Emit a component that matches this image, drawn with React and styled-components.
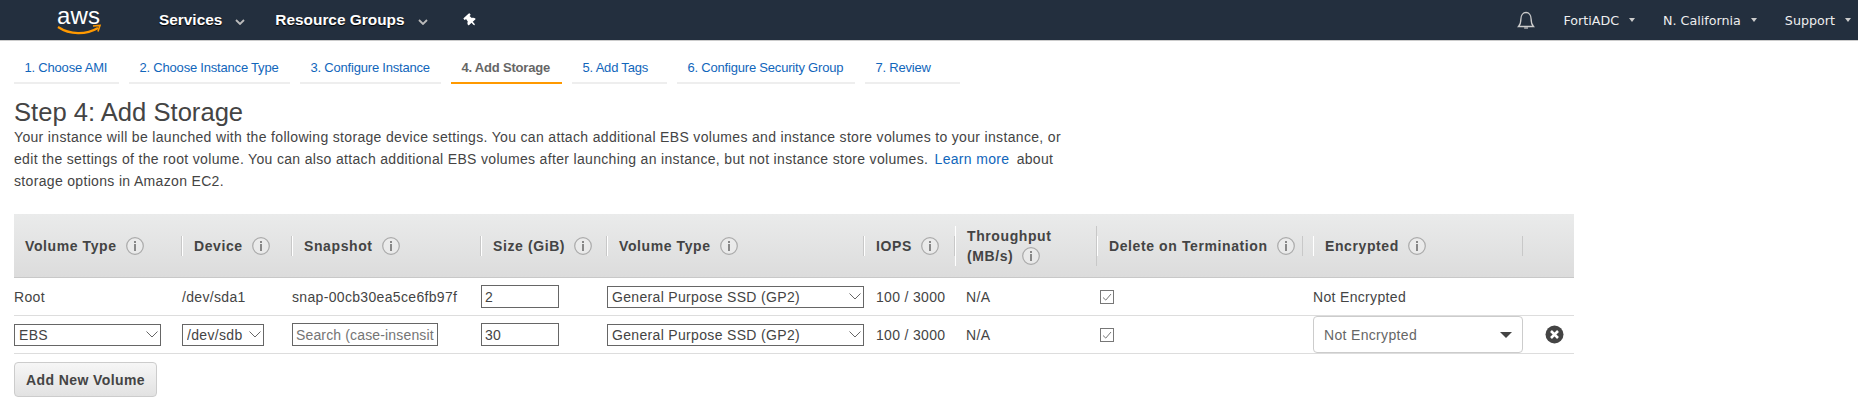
import React from 'react';
import styled, { createGlobalStyle } from 'styled-components';
import { FaThumbtack } from 'react-icons/fa';

const GlobalStyle = createGlobalStyle`
  body {
    margin: 0;
    background: #fff;
    font-family: "Liberation Sans", Arial, sans-serif;
    font-size: 14px;
    letter-spacing: 0.33px;
    color: #444;
  }
`;

const COLUMNS = '168px 110px 189px 126px 257px 91px 142px 216px 210px 51px';

// Top bar
const Nav = styled.nav`
  display: flex;
  align-items: center;
  height: 40px;
  padding-left: 57px;
  background: #232f3e;
  border-bottom: 1px solid #ccc;
  letter-spacing: 0;
`;

const Logo = styled.svg`
  display: block;
  width: 44px;
  height: 30px;
  margin-top: 4px;
  margin-right: 58px;
  overflow: visible;
`;

const MainItem = styled.a`
  display: flex;
  align-items: center;
  gap: 13px;
  margin-right: 30px;
  color: #fff;
  font-size: 15.4px;
  font-weight: 700;
  text-shadow: 0 1px 1px #000;
`;

const Pin = styled.span`
  display: flex;
  margin-left: 6px;
  color: #fff;
  font-size: 13px;
  transform: rotate(-42deg);
`;

const NavRight = styled.div`
  display: flex;
  align-items: center;
  margin-left: auto;
  padding-right: 7px;
`;

const Bell = styled.svg`
  display: block;
  width: 18px;
  height: 18px;
  margin-right: 28px;
`;

const AccountItem = styled.a`
  display: flex;
  align-items: center;
  gap: 10px;
  margin-left: ${props => props.$ml || 0}px;
  color: #eee;
  font-family: "DejaVu Sans", sans-serif;
  font-size: 12.7px;
`;

const Caret = styled.span`
  width: 0;
  height: 0;
  border-left: 3.5px solid transparent;
  border-right: 3.5px solid transparent;
  border-top: 4px solid #ccc;
`;

// Wizard steps
const Tabs = styled.div`
  display: flex;
  gap: 10px;
  margin: 13px 0 0 14px;
`;

const Tab = styled.a`
  box-sizing: border-box;
  width: ${props => props.$w}px;
  height: 30px;
  padding: 4px 0 0 10.5px;
  border-bottom: 2px solid ${props => (props.$active ? '#f90' : '#eee')};
  color: ${props => (props.$active ? '#666' : '#16b')};
  font-size: 13px;
  font-weight: ${props => (props.$active ? 700 : 400)};
  letter-spacing: -0.2px;
  line-height: 20px;
  white-space: nowrap;
`;

const Content = styled.main`
  padding-left: 14px;
`;

const Title = styled.h1`
  margin: 16px 0 2px;
  color: #444;
  font-size: 25.6px;
  font-weight: 400;
  letter-spacing: 0;
  line-height: 24px;
`;

const Intro = styled.p`
  margin: 0 0 22px;
  line-height: 22px;
  white-space: nowrap;
`;

const Link = styled.a`
  margin: 0 3px 0 2px;
  color: #16b;
`;

// Storage table
const Table = styled.div`
  width: 1560px;
`;

const HeadRow = styled.div`
  display: grid;
  grid-template-columns: ${COLUMNS};
  align-items: center;
  height: 63px;
  background: linear-gradient(#eaebeb, #dcdcdc);
  border-bottom: 1px solid #c8c8c8;
`;

const HeadCell = styled.div`
  padding-right: ${props => props.$pr || 0}px;
`;

const HeadLabel = styled.div`
  box-sizing: border-box;
  display: flex;
  flex-wrap: wrap;
  align-items: center;
  column-gap: 9px;
  min-height: 20px;
  padding-left: ${props => (props.$first ? 10 : 11)}px;
  border-left: 1px solid ${props => (props.$first ? 'transparent' : '#fff')};
  border-right: 1px solid #c8c8c8;
  color: #444;
  font-size: 14px;
  font-weight: 700;
  letter-spacing: 0.6px;
  line-height: 20px;
`;

const LineBreak = styled.span`
  flex-basis: 100%;
`;

const Row = styled.div`
  display: grid;
  grid-template-columns: ${COLUMNS};
  align-items: center;
  height: 37px;
  border-bottom: 1px solid #ddd;
  color: #444;
`;

const Cell = styled.div`
  display: flex;
  align-items: center;
  padding-left: ${props => props.$pl || 0}px;
  white-space: nowrap;
`;

const TextInput = styled.input`
  box-sizing: border-box;
  width: ${props => props.$w}px;
  height: 23px;
  padding: 0 3px;
  border: 1px solid #666;
  border-radius: 0;
  background: #fff;
  color: #444;
  font: 14px "Liberation Sans", Arial, sans-serif;
  letter-spacing: 0.33px;
  outline: none;

  &::placeholder {
    color: #757575;
    letter-spacing: 0.15px;
    opacity: 1;
  }
`;

const SelectWrap = styled.div`
  position: relative;
  width: ${props => props.$w}px;
`;

const NativeSelect = styled.select`
  box-sizing: border-box;
  display: block;
  width: 100%;
  height: 22px;
  padding: 0 0 0 4px;
  border: 1px solid #666;
  border-radius: 0;
  background: #fff;
  color: #444;
  font: 14px "Liberation Sans", Arial, sans-serif;
  letter-spacing: 0.33px;
  appearance: none;
  outline: none;
`;

const SelectChevron = styled.svg`
  position: absolute;
  top: 7px;
  right: 3px;
  width: 12px;
  height: 7px;
  pointer-events: none;
`;

const Dropdown = styled.div`
  box-sizing: border-box;
  display: flex;
  align-items: center;
  justify-content: space-between;
  width: 210px;
  height: 37px;
  padding: 0 10px 0 10px;
  border: 1px solid #ccc;
  border-radius: 4px;
  color: #666;
`;

const DropdownCaret = styled.span`
  width: 0;
  height: 0;
  border-left: 6px solid transparent;
  border-right: 6px solid transparent;
  border-top: 6px solid #444;
`;

const CheckBox = styled.svg`
  display: block;
  width: 14px;
  height: 14px;
`;

const RemoveIcon = styled.svg`
  display: block;
  width: 19px;
  height: 19px;
`;

const AddButton = styled.button`
  display: block;
  box-sizing: border-box;
  width: 143px;
  height: 35px;
  margin-top: 8px;
  padding: 0;
  border: 1px solid #ccc;
  border-radius: 4px;
  background: linear-gradient(#f6f6f6, #e2e2e2);
  color: #444;
  font: 700 14px "Liberation Sans", Arial, sans-serif;
  letter-spacing: 0.4px;
`;

const InfoSvg = styled.svg`
  display: block;
  flex: none;
  width: 18px;
  height: 18px;
`;

const InfoIcon = () => (
  <InfoSvg viewBox="0 0 18 18">
    <circle cx="9" cy="9" r="8.3" fill="#f2f2f2" fillOpacity="0.5" stroke="#aaa" strokeWidth="1.2" />
    <rect x="8" y="4" width="2" height="2" fill="#888" />
    <rect x="8" y="7" width="2" height="7" fill="#888" />
  </InfoSvg>
);

const NavChevron = () => (
  <svg width="10" height="6" viewBox="0 0 10 6" style={{ marginTop: 3 }}>
    <path d="M1 1l4 4 4-4" fill="none" stroke="#bbb" strokeWidth="1.8" />
  </svg>
);

const Select = ({ width, value, options }) => (
  <SelectWrap $w={width}>
    <NativeSelect defaultValue={value}>
      {(options || [value]).map(o => (
        <option key={o}>{o}</option>
      ))}
    </NativeSelect>
    <SelectChevron viewBox="0 0 12 7">
      <path d="M.5 .5L6 6l5.5-5.5" fill="none" stroke="#666" strokeWidth="1" />
    </SelectChevron>
  </SelectWrap>
);

const Checked = () => (
  <CheckBox viewBox="0 0 14 14">
    <rect x=".5" y=".5" width="13" height="13" fill="#fff" stroke="#777" />
    <path d="M3 7.5l2.8 2.6L11 4" fill="none" stroke="#777" strokeWidth="1" />
  </CheckBox>
);

const steps = [
  { label: '1. Choose AMI', w: 105 },
  { label: '2. Choose Instance Type', w: 161 },
  { label: '3. Configure Instance', w: 141 },
  { label: '4. Add Storage', w: 111, active: true },
  { label: '5. Add Tags', w: 95 },
  { label: '6. Configure Security Group', w: 178 },
  { label: '7. Review', w: 95 },
];

const columns = [
  { label: 'Volume Type', first: true },
  { label: 'Device' },
  { label: 'Snapshot' },
  { label: 'Size (GiB)' },
  { label: 'Volume Type' },
  { label: 'IOPS' },
  { label: 'Throughput', second: '(MB/s)' },
  { label: 'Delete on Termination', pr: 10 },
  { label: 'Encrypted' },
];

const App = () => (
  <>
    <GlobalStyle />
    <Nav>
      <Logo viewBox="0 0 44 30">
        <text x="0" y="17" fill="#fff" fontFamily="Liberation Sans" fontSize="24" textLength="43">aws</text>
        <path d="M1 20c12 8 28 8 40 1" fill="none" stroke="#f90" strokeWidth="2.2" />
        <path d="M36 19l7-.5-2 6" fill="none" stroke="#f90" strokeWidth="1.6" />
      </Logo>
      <MainItem>Services <NavChevron /></MainItem>
      <MainItem>Resource Groups <NavChevron /></MainItem>
      <Pin><FaThumbtack /></Pin>
      <NavRight>
        <Bell viewBox="0 0 18 18">
          <path d="M1.5 15.5c1.6-1.7 2.4-4 2.4-7.5 0-3.8 2.2-6.5 5.1-6.5s5.1 2.7 5.1 6.5c0 3.5.8 5.8 2.4 7.5z" fill="none" stroke="#ccc" strokeWidth="1.3" />
          <path d="M7 17h4" stroke="#ccc" strokeWidth="1.2" />
        </Bell>
        <AccountItem>FortiADC <Caret /></AccountItem>
        <AccountItem $ml={28}>N. California <Caret /></AccountItem>
        <AccountItem $ml={28}>Support <Caret /></AccountItem>
      </NavRight>
    </Nav>
    <Tabs>
      {steps.map(s => (
        <Tab key={s.label} $w={s.w} $active={s.active}>{s.label}</Tab>
      ))}
    </Tabs>
    <Content>
      <Title>Step 4: Add Storage</Title>
      <Intro>
        Your instance will be launched with the following storage device settings. You can attach additional EBS volumes and instance store volumes to your instance, or
        <br />
        edit the settings of the root volume. You can also attach additional EBS volumes after launching an instance, but not instance store volumes. <Link>Learn more</Link> about
        <br />
        storage options in Amazon EC2.
      </Intro>
      <Table>
        <HeadRow>
          {columns.map((c, i) => (
            <HeadCell key={i} $pr={c.pr}>
              <HeadLabel $first={c.first}>
                {c.label}
                {c.second && <LineBreak />}
                {c.second}
                <InfoIcon />
              </HeadLabel>
            </HeadCell>
          ))}
          <HeadCell />
        </HeadRow>
        <Row>
          <Cell>Root</Cell>
          <Cell>/dev/sda1</Cell>
          <Cell>snap-00cb30ea5ce6fb97f</Cell>
          <Cell><TextInput $w={78} defaultValue="2" /></Cell>
          <Cell><Select width={257} value="General Purpose SSD (GP2)" /></Cell>
          <Cell $pl={12}>100 / 3000</Cell>
          <Cell $pl={11}>N/A</Cell>
          <Cell $pl={3}><Checked /></Cell>
          <Cell>Not Encrypted</Cell>
          <Cell />
        </Row>
        <Row>
          <Cell><Select width={147} value="EBS" /></Cell>
          <Cell><Select width={82} value="/dev/sdb" /></Cell>
          <Cell><TextInput $w={146} placeholder="Search (case-insensitive)" /></Cell>
          <Cell><TextInput $w={78} defaultValue="30" /></Cell>
          <Cell><Select width={257} value="General Purpose SSD (GP2)" /></Cell>
          <Cell $pl={12}>100 / 3000</Cell>
          <Cell $pl={11}>N/A</Cell>
          <Cell $pl={3}><Checked /></Cell>
          <Cell>
            <Dropdown>Not Encrypted <DropdownCaret /></Dropdown>
          </Cell>
          <Cell $pl={22}>
            <RemoveIcon viewBox="0 0 19 19">
              <circle cx="9.5" cy="9.5" r="9" fill="#444" />
              <path d="M6 6l7 7M13 6l-7 7" stroke="#fff" strokeWidth="2.6" />
            </RemoveIcon>
          </Cell>
        </Row>
      </Table>
      <AddButton>Add New Volume</AddButton>
    </Content>
  </>
);

export default App;
